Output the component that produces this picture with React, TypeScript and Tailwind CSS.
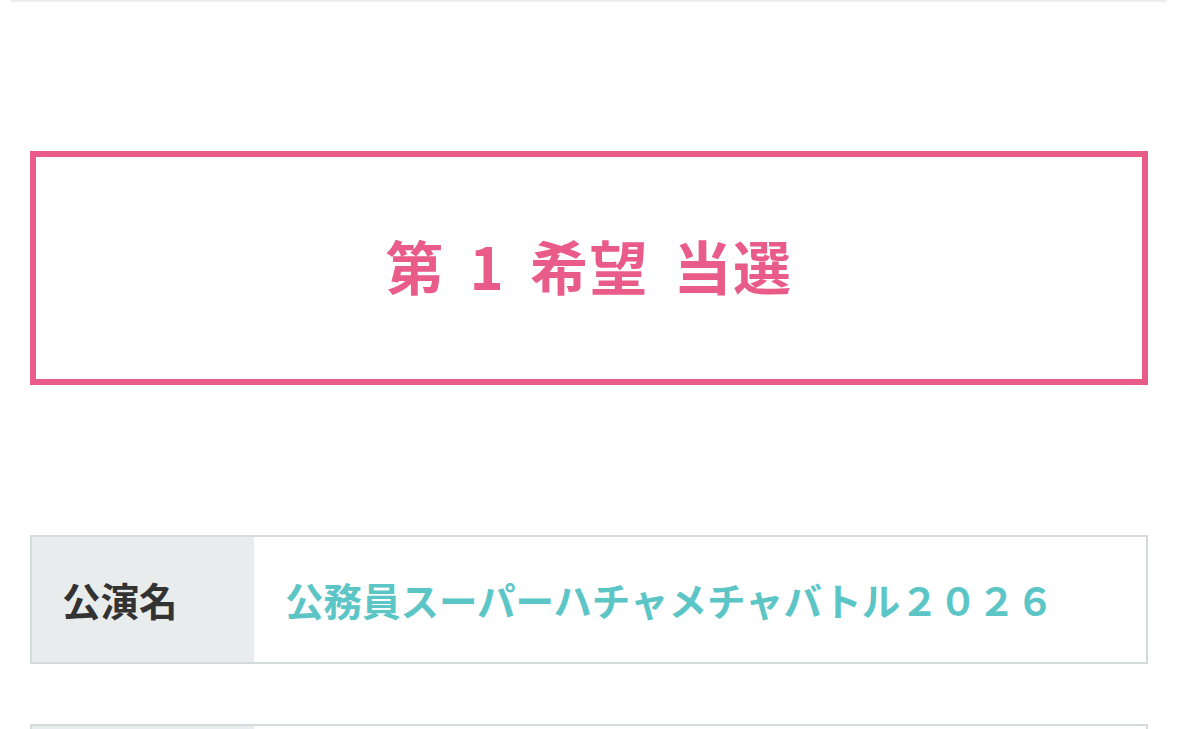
const jp = {
  fontFamily: '"Noto Sans CJK JP", "Noto Sans", sans-serif',
};

function InfoRow({ label, value }: { label?: string; value?: string }) {
  return (
    <div className="flex h-[129px] border-2 border-[#d3dbdb] bg-white">
      <div className="flex w-[222px] shrink-0 items-center bg-[#e8eced] pl-[30px]">
        {label && (
          <span className="text-[38.5px] font-bold leading-none text-[#333333]">
            {label}
          </span>
        )}
      </div>
      <div className="flex flex-1 items-center pl-[31px]">
        {value && (
          <span className="text-[38.5px] font-bold leading-none text-[#5cc5c6]">
            {value}
          </span>
        )}
      </div>
    </div>
  );
}

export default function App() {
  return (
    <div className="h-[729px] overflow-hidden bg-white" style={jp}>
      <div className="mx-[11px] h-[2px] bg-[#eeeeee]" />

      <div className="px-[30px] pt-[149px]">
        <div className="flex h-[234px] items-center justify-center border-[6px] border-[#e95c8a]">
          <p className="-mt-[6px] text-[58px] font-bold leading-none tracking-[1.5px] text-[#e95c8a] [word-spacing:10px]">
            第 1 希望 当選
          </p>
        </div>

        <div className="mt-[150px]">
          <InfoRow
            label="公演名"
            value="公務員スーパーハチャメチャバトル２０２６"
          />
        </div>

        <div className="mt-[60px]">
          <InfoRow />
        </div>
      </div>
    </div>
  );
}
